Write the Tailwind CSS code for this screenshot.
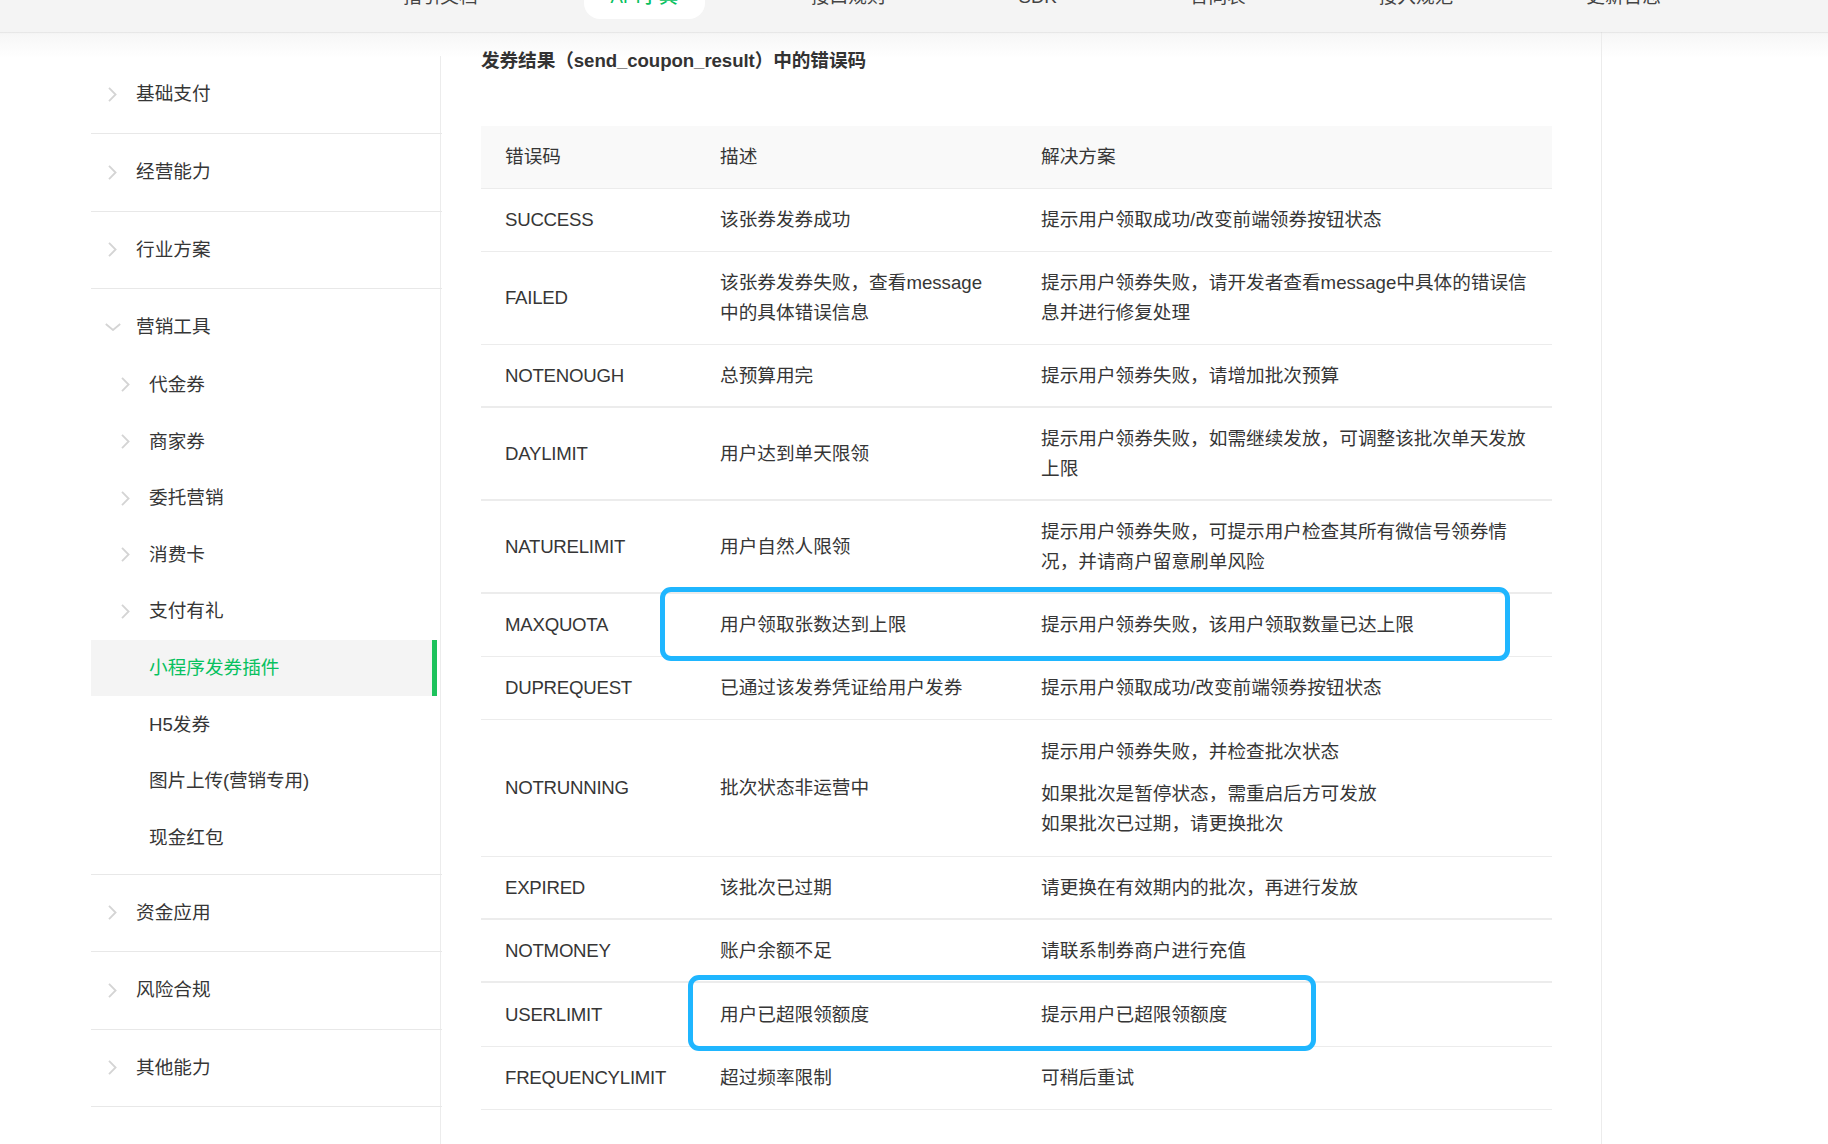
<!DOCTYPE html>
<html lang="zh">
<head>
<meta charset="utf-8">
<script src="https://cdn.jsdelivr.net/npm/@tailwindcss/browser@4"></script>
<title>错误码</title>
</head>
<body class="bg-white">
<div class="relative h-[1144px] w-[1828px] overflow-hidden bg-white font-['Liberation_Sans','Noto_Sans_CJK_SC',sans-serif] text-[18.65px] text-[#363636]">
  <header class="relative z-10 h-8 overflow-hidden bg-[#f4f4f4] shadow-[0_1px_1px_rgba(0,0,0,0.06)]">
    <nav class="-mt-[25px] flex h-11 gap-[79px] pl-[376px] text-[#444]">
      <a class="flex items-center px-[27px]">指引文档</a>
      <a class="flex items-center rounded-b-[16px] bg-white px-[27px] font-medium text-[#07c160]">API字典</a>
      <a class="flex items-center px-[27px]">接口规则</a>
      <a class="flex items-center px-[27px]">SDK</a>
      <a class="flex items-center px-[27px]">合同表</a>
      <a class="flex items-center px-[27px]">接入规范</a>
      <a class="flex items-center px-[27px]">更新日志</a>
    </nav>
  </header>
  <div class="-mb-[26px] h-[26px] bg-gradient-to-b from-[#f6f6f6] to-white"></div>
  <div class="relative flex h-[1112px]">
    <aside class="ml-[91px] mt-[24px] h-[1088px] w-[350px] flex-none border-r border-[#ececec]">
      <ul class="w-[351px] pt-px">
        <li class="flex h-[77.33px] items-start border-b border-[#e8e8e8] pl-[17px] pt-[24px]"><span class="flex h-[26px] items-center"><svg class="h-[15px] w-[9px]" viewBox="0 0 9 15" fill="none" stroke="#d4d4d4" stroke-width="1.8"><path d="M1 .8l6.6 6.7L1 14.2"/></svg></span><span class="ml-[19px] leading-[26px]">基础支付</span></li>
        <li class="flex h-[77.33px] items-start border-b border-[#e8e8e8] pl-[17px] pt-[25px]"><span class="flex h-[26px] items-center"><svg class="h-[15px] w-[9px]" viewBox="0 0 9 15" fill="none" stroke="#d4d4d4" stroke-width="1.8"><path d="M1 .8l6.6 6.7L1 14.2"/></svg></span><span class="ml-[19px] leading-[26px]">经营能力</span></li>
        <li class="flex h-[77.33px] items-start border-b border-[#e8e8e8] pl-[17px] pt-[25px]"><span class="flex h-[26px] items-center"><svg class="h-[15px] w-[9px]" viewBox="0 0 9 15" fill="none" stroke="#d4d4d4" stroke-width="1.8"><path d="M1 .8l6.6 6.7L1 14.2"/></svg></span><span class="ml-[19px] leading-[26px]">行业方案</span></li>
        <li class="h-[586px] border-b border-[#e8e8e8] pt-[25px]">
          <div class="flex h-[26px] items-center pl-[14px]"><svg class="h-[8px] w-[16px]" viewBox="0 0 16 8" fill="none" stroke="#d4d4d4" stroke-width="1.8"><path d="M.8 1l7.2 6 7.2-6"/></svg><span class="ml-[15px] leading-[26px]">营销工具</span></div>
          <ul class="mt-[16.7px] w-[346px]">
            <li class="flex h-[56.6px] items-center pl-[30px]"><svg class="h-[15px] w-[9px]" viewBox="0 0 9 15" fill="none" stroke="#d4d4d4" stroke-width="1.8"><path d="M1 .8l6.6 6.7L1 14.2"/></svg><span class="ml-[19px]">代金券</span></li>
            <li class="flex h-[56.6px] items-center pl-[30px]"><svg class="h-[15px] w-[9px]" viewBox="0 0 9 15" fill="none" stroke="#d4d4d4" stroke-width="1.8"><path d="M1 .8l6.6 6.7L1 14.2"/></svg><span class="ml-[19px]">商家券</span></li>
            <li class="flex h-[56.6px] items-center pl-[30px]"><svg class="h-[15px] w-[9px]" viewBox="0 0 9 15" fill="none" stroke="#d4d4d4" stroke-width="1.8"><path d="M1 .8l6.6 6.7L1 14.2"/></svg><span class="ml-[19px]">委托营销</span></li>
            <li class="flex h-[56.6px] items-center pl-[30px]"><svg class="h-[15px] w-[9px]" viewBox="0 0 9 15" fill="none" stroke="#d4d4d4" stroke-width="1.8"><path d="M1 .8l6.6 6.7L1 14.2"/></svg><span class="ml-[19px]">消费卡</span></li>
            <li class="flex h-[56.6px] items-center pl-[30px]"><svg class="h-[15px] w-[9px]" viewBox="0 0 9 15" fill="none" stroke="#d4d4d4" stroke-width="1.8"><path d="M1 .8l6.6 6.7L1 14.2"/></svg><span class="ml-[19px]">支付有礼</span></li>
            <li class="flex h-[56.6px] items-center border-r-[5px] border-[#1dc25c] bg-[#f4f4f4] pl-[58px] text-[#07c160]">小程序发券插件</li>
            <li class="flex h-[56.6px] items-center pl-[58px]">H5发券</li>
            <li class="flex h-[56.6px] items-center pl-[58px] tracking-[-0.15px]">图片上传(营销专用)</li>
            <li class="flex h-[56.6px] items-center pl-[58px]">现金红包</li>
          </ul>
        </li>
        <li class="flex h-[77.33px] items-start border-b border-[#e8e8e8] pl-[17px] pt-[25px]"><span class="flex h-[26px] items-center"><svg class="h-[15px] w-[9px]" viewBox="0 0 9 15" fill="none" stroke="#d4d4d4" stroke-width="1.8"><path d="M1 .8l6.6 6.7L1 14.2"/></svg></span><span class="ml-[19px] leading-[26px]">资金应用</span></li>
        <li class="flex h-[77.33px] items-start border-b border-[#e8e8e8] pl-[17px] pt-[25px]"><span class="flex h-[26px] items-center"><svg class="h-[15px] w-[9px]" viewBox="0 0 9 15" fill="none" stroke="#d4d4d4" stroke-width="1.8"><path d="M1 .8l6.6 6.7L1 14.2"/></svg></span><span class="ml-[19px] leading-[26px]">风险合规</span></li>
        <li class="flex h-[77.33px] items-start border-b border-[#e8e8e8] pl-[17px] pt-[25px]"><span class="flex h-[26px] items-center"><svg class="h-[15px] w-[9px]" viewBox="0 0 9 15" fill="none" stroke="#d4d4d4" stroke-width="1.8"><path d="M1 .8l6.6 6.7L1 14.2"/></svg></span><span class="ml-[19px] leading-[26px]">其他能力</span></li>
      </ul>
    </aside>
    <main class="relative w-[1160px] flex-none pl-[40px] pt-[16px]">
      <h2 class="text-[18.65px] font-bold leading-[26px] tracking-[-0.08px] text-[#333]">发券结果（send_coupon_result）中的错误码</h2>
      <table class="mt-[52px] w-[1071px] table-fixed border-separate border-spacing-0 leading-[29.7px]">
        <colgroup><col class="w-[215px]"><col class="w-[321px]"><col class="w-[535px]"></colgroup>
        <thead>
          <tr class="h-[63px] bg-[#f9f9f9] text-left [&>th]:border-b [&>th]:border-[#ececec] [&>th]:px-6 [&>th]:font-normal"><th>错误码</th><th>描述</th><th>解决方案</th></tr>
        </thead>
        <tbody class="[&_td]:whitespace-nowrap [&_td]:px-6 [&_td]:align-middle [&_td:first-child]:tracking-[-0.25px]">
          <tr class="h-[63px] [&>td]:border-b [&>td]:border-[#ececec]"><td>SUCCESS</td><td>该张券发券成功</td><td>提示用户领取成功/改变前端领券按钮状态</td></tr>
          <tr class="h-[93px] [&>td]:border-b [&>td]:border-[#ececec]"><td>FAILED</td><td>该张券发券失败，查看message<br>中的具体错误信息</td><td>提示用户领券失败，请开发者查看message中具体的错误信<br>息并进行修复处理</td></tr>
          <tr class="h-[63px] [&>td]:border-b-2 [&>td]:border-[#ececec]"><td>NOTENOUGH</td><td>总预算用完</td><td>提示用户领券失败，请增加批次预算</td></tr>
          <tr class="h-[93px] [&>td]:border-b-2 [&>td]:border-[#ececec]"><td>DAYLIMIT</td><td>用户达到单天限领</td><td>提示用户领券失败，如需继续发放，可调整该批次单天发放<br>上限</td></tr>
          <tr class="h-[93px] [&>td]:border-b-2 [&>td]:border-[#ececec]"><td>NATURELIMIT</td><td>用户自然人限领</td><td>提示用户领券失败，可提示用户检查其所有微信号领券情<br>况，并请商户留意刷单风险</td></tr>
          <tr class="h-[63px] [&>td]:border-b [&>td]:border-[#ececec]"><td>MAXQUOTA</td><td>用户领取张数达到上限</td><td>提示用户领券失败，该用户领取数量已达上限</td></tr>
          <tr class="h-[63px] [&>td]:border-b [&>td]:border-[#ececec]"><td>DUPREQUEST</td><td>已通过该发券凭证给用户发券</td><td>提示用户领取成功/改变前端领券按钮状态</td></tr>
          <tr class="h-[137px] [&>td]:border-b [&>td]:border-[#ececec]"><td>NOTRUNNING</td><td>批次状态非运营中</td><td><p class="mb-3">提示用户领券失败，并检查批次状态</p><p>如果批次是暂停状态，需重启后方可发放<br>如果批次已过期，请更换批次</p></td></tr>
          <tr class="h-[63px] [&>td]:border-b-2 [&>td]:border-[#ececec]"><td>EXPIRED</td><td>该批次已过期</td><td>请更换在有效期内的批次，再进行发放</td></tr>
          <tr class="h-[63px] [&>td]:border-b-2 [&>td]:border-[#ececec]"><td>NOTMONEY</td><td>账户余额不足</td><td>请联系制券商户进行充值</td></tr>
          <tr class="h-[64px] [&>td]:border-b [&>td]:border-[#ececec]"><td>USERLIMIT</td><td>用户已超限领额度</td><td>提示用户已超限领额度</td></tr>
          <tr class="h-[63px] [&>td]:border-b [&>td]:border-[#ececec]"><td>FREQUENCYLIMIT</td><td>超过频率限制</td><td>可稍后重试</td></tr>
        </tbody>
      </table>
      <div class="absolute left-[219px] top-[555px] h-[74px] w-[850px] rounded-[11px] border-[5px] border-[#1fb6ff]"></div>
      <div class="absolute left-[247px] top-[943px] h-[76px] w-[628px] rounded-[11px] border-[5px] border-[#1fb6ff]"></div>
    </main>
    <div class="flex-1 border-l border-[#ececec]"></div>
  </div>
</div>
</body>
</html>
